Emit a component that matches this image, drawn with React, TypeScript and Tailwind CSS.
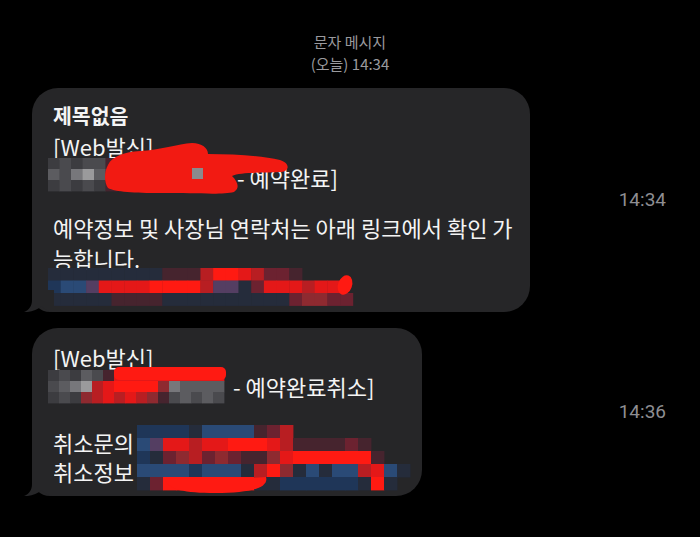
import React from "react";

// palette for the pixelated redaction blocks
const PAL: Record<string, string> = {
  n: "#252c3b",
  g: "#3c3c40",
  h: "#4a4a4e",
  m: "#5c5c60",
  l: "#77777b",
  w: "#9a9a9c",
  b: "#2a4a76",
  B: "#1f3658",
  p: "#543e62",
  d: "#46242e",
  D: "#6c2230",
  q: "#8e2a30",
  R: "#b81e22",
  r: "#e41818",
  F: "#ff1a12",
};

function Mosaic({ x, y, cw, ch, rows }: { x: number; y: number; cw: number; ch: number; rows: string[] }) {
  return (
    <>
      {rows.map((row, r) =>
        row.split("").map((c, i) =>
          c === "." ? null : (
            <rect key={`${r}-${i}`} x={x + i * cw} y={y + r * ch} width={cw + 0.4} height={ch + 0.4} fill={PAL[c]} />
          )
        )
      )}
    </>
  );
}

function Tail() {
  return (
    <svg className="absolute left-[-8px] bottom-0" width="30" height="22" viewBox="0 0 30 22">
      <path d="M8 0 L8 10 C8 16 5 20 0 22 C7 22.5 13 20 18 16 C21 19.5 24 22 30 22 L30 0 Z" fill="#262628" />
    </svg>
  );
}

function Bubble({ width, children }: { width: string; children: React.ReactNode }) {
  return (
    <div className={`relative rounded-[26px] rounded-bl-[18px] bg-[#262628] text-[#f4f4f4] ${width}`}>
      {children}
      <Tail />
    </div>
  );
}

export default function App() {
  return (
    <div className="w-[700px] h-[537px] overflow-hidden bg-black font-['Noto_Sans_CJK_KR',sans-serif]">
      {/* header */}
      <div className="pt-[31px] text-center text-[15px] leading-[22px] text-[#9a9a9e]">
        <p>문자 메시지</p>
        <p>(오늘) 14:34</p>
      </div>

      {/* message 1 */}
      <div className="mt-[13px] flex items-center justify-between pl-[32px] pr-[34px]">
        <Bubble width="w-[498px]">
          <div className="pl-[21px] pt-[12px] pb-[7px] text-[22px] leading-[31px]">
            <p className="text-[20.5px] font-bold">제목없음</p>
            <p>[Web발신]</p>
            <div className="flex h-[31px] items-center">
              <svg className="relative z-10 shrink-0" width="184" height="31" viewBox="53 162 184 31" overflow="visible">
                <Mosaic x={48} y={158} cw={11.5} ch={11} rows={["ghghhd", "mhlwmD", "ghghgd"]} />
                <path
                  d="M108 165 C112 156 125 152 140 151 C160 150 178 144 192 143 C202 143 208 148 208 154 C235 154 262 156 280 160 C290 163 290 171 281 172 C262 173 240 172 232 176 C238 182 240 188 234 192 C222 195 200 193 160 193 C135 193 115 192 108 188 C104 182 104 172 108 165 Z"
                  fill="#f21a12"
                />
                <rect x={192} y={168} width={11} height={11} fill="#8a8a8c" />
              </svg>
              <span>- 예약완료]</span>
            </div>
            <p className="mt-[19px]">예약정보 및 사장님 연락처는 아래 링크에서 확인 가</p>
            <p>능합니다.</p>
            <div className="h-[31px]">
              <svg width="300" height="31" viewBox="53 274 300 31" overflow="visible">
                <Mosaic
                  x={48}
                  y={268}
                  cw={12.7}
                  ch={12.5}
                  rows={["nnnnnnnnndddRFFrRDDd...", "BbbprrrrFFFFRppnDrrrRrr", "nnnnnddddnnnnnnnnnnDqqDD"]}
                />
                <ellipse cx={345} cy={285} rx={7} ry={10} transform="rotate(20 345 285)" fill="#ff1a12" />
              </svg>
            </div>
          </div>
        </Bubble>
        <span className="font-['Roboto',sans-serif] text-[19px] text-[#8e8e92]">14:34</span>
      </div>

      {/* message 2 */}
      <div className="mt-[16px] flex items-center justify-between pl-[32px] pr-[34px]">
        <Bubble width="w-[390px]">
          <div className="pl-[21px] pt-[15px] pb-[10px] text-[22px] leading-[29px]">
            <p>[Web발신]</p>
            <div className="flex h-[29px] items-center">
              <svg className="relative z-10 shrink-0" width="180" height="29" viewBox="53 372 180 29" overflow="visible">
                <Mosaic
                  x={48}
                  y={370}
                  cw={11}
                  ch={11}
                  rows={["ghgmhdrrrrrrrrrr", "hmlwRrFFFFqlmmmm", "ghgqRrRrRqdhmhmh"]}
                />
                <rect x={114} y={367} width={112} height={13} rx={5} fill="#ff1a12" />
              </svg>
              <span>- 예약완료취소]</span>
            </div>
            <div className="mt-[27px] flex">
              <div className="w-[84px] shrink-0">
                <p>취소문의</p>
                <p>취소정보</p>
              </div>
              <svg className="shrink-0" width="273" height="58" viewBox="137 428 273 58" overflow="visible">
                <Mosaic
                  x={137}
                  y={425}
                  cw={13}
                  ch={13}
                  rows={[
                    "BBBBnbbbbdDR.........",
                    "bprrRrrFFFrRddddDd...",
                    "BnDqRDqDddqrFFFFFFd..",
                    "bbbbBbbbnRFqnbnbbRrbn",
                    "nDFFFFFFFnnBBBBBBnFn.",
                  ]}
                />
                <path d="M165 479 L266 477 C269 488 250 493 215 493 C185 493 168 490 165 479 Z" fill="#ff1a12" />
              </svg>
            </div>
          </div>
        </Bubble>
        <span className="font-['Roboto',sans-serif] text-[19px] text-[#8e8e92]">14:36</span>
      </div>
    </div>
  );
}
